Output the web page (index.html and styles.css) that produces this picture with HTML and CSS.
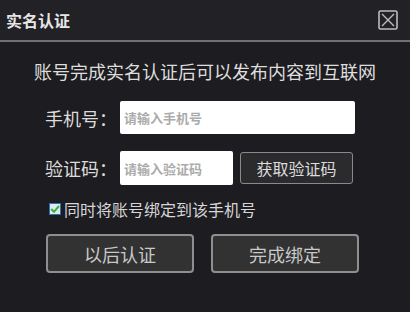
FILE: index.html
```html
<!DOCTYPE html>
<html lang="zh-CN">
<head>
    <meta charset="UTF-8">
    <title>实名认证</title>
    <link rel="stylesheet" href="styles.css">
</head>
<body>
    <div class="dialog">
        <div class="titlebar">
            <span class="title">实名认证</span>
            <button class="close-btn" aria-label="关闭">
                <svg width="20" height="20" viewBox="0 0 20 20">
                    <rect x="1" y="1" width="18" height="18" rx="1.5" fill="none" stroke="#bdbdbd" stroke-width="1.6"/>
                    <path d="M4 4 L16 16 M16 4 L4 16" stroke="#bdbdbd" stroke-width="1.4"/>
                </svg>
            </button>
        </div>
        <div class="separator"></div>

        <div class="content">
            <p class="notice">账号完成实名认证后可以发布内容到互联网</p>

            <div class="form-row">
                <label class="field-label">手机号：</label>
                <input class="text-input phone" type="text" placeholder="请输入手机号">
            </div>

            <div class="form-row code-row">
                <label class="field-label">验证码：</label>
                <input class="text-input code" type="text" placeholder="请输入验证码">
                <button class="code-btn">获取验证码</button>
            </div>

            <label class="bind-option">
                <span class="checkbox">
                    <svg width="10" height="10" viewBox="0 0 10 10">
                        <path d="M1.2 5 L4 7.8 L9 2" fill="none" stroke="#35b830" stroke-width="2"/>
                    </svg>
                </span>
                同时将账号绑定到该手机号
            </label>

            <div class="actions">
                <button class="action-btn">以后认证</button>
                <button class="action-btn">完成绑定</button>
            </div>
        </div>
    </div>
</body>
</html>
```

FILE: styles.css
```css
* {
    box-sizing: border-box;
}
body {
    margin: 0;
    background-color: #1d1c20;
    font-family: "Noto Sans CJK SC", "Noto Sans", sans-serif;
    color: #dcdcdc;
}
.dialog {
    width: 410px;
    height: 312px;
    background-color: #1d1c20;
}
.titlebar {
    height: 40px;
    display: flex;
    align-items: center;
    justify-content: space-between;
    padding: 0 12px 0 6px;
    background-color: #222125;
}
.title {
    font-size: 16px;
    font-weight: bold;
    color: #e6e6e6;
}
.close-btn {
    width: 20px;
    height: 20px;
    padding: 0;
    border: none;
    background: none;
    display: flex;
}
.separator {
    height: 2px;
    background-color: #707070;
}
.content {
    padding-top: 16px;
}
.notice {
    margin: 0;
    font-size: 18px;
    line-height: 26px;
    text-align: center;
    color: #dedede;
}
.form-row {
    display: flex;
    align-items: center;
    margin-top: 17px;
    padding-left: 45px;
}
.code-row {
    margin-top: 17px;
}
.field-label {
    width: 75px;
    font-size: 18px;
    color: #dcdcdc;
}
.text-input {
    height: 33px;
    border: none;
    border-radius: 2px;
    background-color: #ffffff;
    padding: 0 4px;
    font-family: inherit;
    font-size: 13px;
    font-weight: bold;
}
.text-input::placeholder {
    color: #ababab;
}
.phone {
    width: 235px;
}
.code {
    width: 113px;
    height: 34px;
}
.code-btn {
    width: 113px;
    height: 32px;
    margin-left: 7px;
    border: 1px solid #8a8a8a;
    border-radius: 3px;
    background-color: #2b2b2d;
    color: #dcdcdc;
    font-family: inherit;
    font-size: 16px;
}
.bind-option {
    display: flex;
    align-items: center;
    margin: 12px 0 0 49px;
    font-size: 16px;
    color: #d6d6d6;
}
.checkbox {
    width: 12px;
    height: 12px;
    margin-right: 3px;
    display: flex;
    align-items: center;
    justify-content: center;
    background-color: #dfeaf6;
    border: 1px solid #2f6fb5;
}
.actions {
    display: flex;
    gap: 17px;
    margin: 13px 0 0 46px;
}
.action-btn {
    width: 148px;
    height: 39px;
    border: 2px solid #8f8f8f;
    border-radius: 4px;
    background-color: #323233;
    color: #c9c9c9;
    font-family: inherit;
    font-size: 18px;
}
```
